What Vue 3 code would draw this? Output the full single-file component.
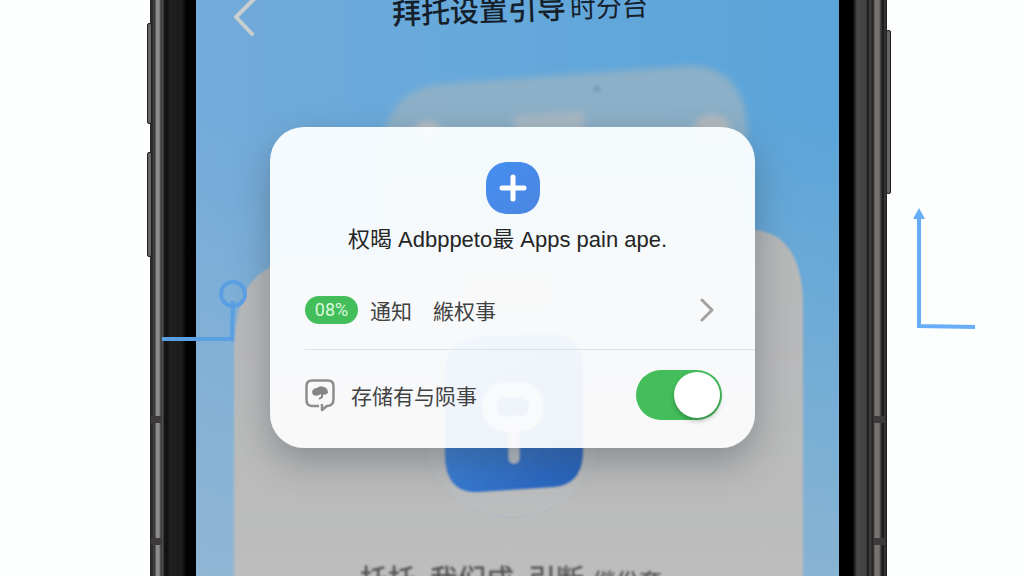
<script setup>
import { ref } from 'vue'
const storage = ref(true)
</script>

<template>
  <main class="scene">
    <div class="margin"></div>
    <div class="edge edge-left">
      <i class="key key-up"></i>
      <i class="key key-down"></i>
      <i class="seam seam-a"></i>
      <i class="seam seam-b"></i>
    </div>
    <section class="screen">
      <svg class="backdrop" viewBox="0 0 643 576" preserveAspectRatio="xMidYMin slice" aria-hidden="true">
        <defs>
          <linearGradient id="sheet" x1="0" y1="0" x2="0" y2="1">
            <stop offset="0" stop-color="#b6b8b9" />
            <stop offset="1" stop-color="#bdbdbd" />
          </linearGradient>
          <linearGradient id="tile" x1="0" y1="0" x2="1" y2="1">
            <stop offset="0" stop-color="#4a93e6" />
            <stop offset="1" stop-color="#2560bb" />
          </linearGradient>
          <filter id="soft" x="-10%" y="-10%" width="120%" height="120%"><feGaussianBlur stdDeviation="3" /></filter>
          <filter id="fine"><feGaussianBlur stdDeviation="1" /></filter>
        </defs>
        <g filter="url(#soft)">
          <path d="M184 240V150C190 108 210 88 246 84L492 66C526 65 546 84 551 120V240Z" fill="#92b2c5" fill-opacity=".88" />
          <ellipse cx="232" cy="130" rx="13" ry="9" fill="#b9bfc4" />
          <ellipse cx="516" cy="128" rx="18" ry="13" fill="#b3bac0" />
          <path d="M318 116L388 111V130H318Z" fill="#a7b8c4" />
        </g>
        <circle cx="401" cy="89" r="4" fill="#7fa3ba" filter="url(#fine)" />
        <path d="M38 600V350C40 302 48 276 86 262L560 230C590 234 605 256 607 300V600Z" fill="url(#sheet)" filter="url(#fine)" />
        <circle cx="316" cy="426" r="91" fill="#c1c2c3" fill-opacity=".35" stroke="#b0b9c5" stroke-width="1" />
        <rect x="266" y="272" width="90" height="34" rx="10" fill="#cdb9a6" filter="url(#soft)" />
        <g filter="url(#fine)">
          <path d="M249 372C249 348 262 338 282 337L354 334C376 334 387 346 387 368V451C387 472 378 485 358 487L282 492C260 493 249 480 249 454Z" fill="url(#tile)" />
          <path d="M318 420V458" stroke="#bdc4ca" stroke-width="11" stroke-linecap="round" />
          <rect x="294" y="390" width="46" height="34" rx="15" fill="none" stroke="#c9d2da" stroke-width="14" />
        </g>
      </svg>
      <header class="topbar">
        <button class="back" type="button" aria-label="返回">
          <svg viewBox="0 0 24 40" width="24" height="40"><path d="M22 -1L4 17L20 34" fill="none" stroke="#c8cecd" stroke-width="4" stroke-linecap="round" stroke-linejoin="round" /></svg>
        </button>
        <h1>拜托设置引导<span>时分台</span></h1>
      </header>

      <div class="dialog" role="dialog" aria-labelledby="dialog-title">
        <svg class="badge" viewBox="0 0 54 52" width="54" height="52" aria-hidden="true">
          <defs><linearGradient id="plus" x1="0" y1="0" x2="1" y2="1"><stop offset="0" stop-color="#438ef0" /><stop offset="1" stop-color="#4c86e2" /></linearGradient></defs>
          <path d="M22 0H32C46 0 54 10 54 22V30C54 43 45 52 32 52H22C9 52 0 43 0 30V22C0 9 9 0 22 0Z" fill="url(#plus)" />
          <path d="M27 15V37M16 26H38" stroke="#fff" stroke-width="5" stroke-linecap="round" />
        </svg>
        <h2 id="dialog-title">权暍 Adbppeto最 Apps pain ape.</h2>
        <button class="row" type="button">
          <span class="pill">08%</span>
          <span class="label">通知</span>
          <span class="label second">緱权事</span>
          <svg class="next" viewBox="0 0 16 24" width="16" height="24" aria-hidden="true"><path d="M3 2L13 12L3 22" fill="none" stroke="#a2a2a2" stroke-width="3" stroke-linecap="round" stroke-linejoin="round" /></svg>
        </button>
        <div class="row storage">
          <svg viewBox="0 0 30 33" width="30" height="33" aria-hidden="true">
            <path d="M14 27H7Q1.500 27 1.500 21V7Q1.500 1.500 7 1.500H23Q28.500 1.500 28.500 7V20Q28.500 27 22 27L17 31V25" fill="none" stroke="#8d8d8d" stroke-width="2.500" stroke-linejoin="round" />
            <path d="M7 13Q8 9 12 9Q15 6 19 8Q23 9 23 14Q20 17 16 15Q12 18 8 16Z" fill="#858585" />
            <path d="M17 15V18L14 20" fill="none" stroke="#858585" stroke-width="2" />
          </svg>
          <label for="storage">存储有与陨事</label>
          <input id="storage" v-model="storage" type="checkbox" role="switch" />
        </div>
      </div>

      <p class="caption">托托<span>我们成</span><span>引断</span><small>继份套</small></p>
    </section>
    <div class="edge edge-right">
      <i class="key key-power"></i>
      <i class="seam seam-a"></i>
      <i class="seam seam-b"></i>
    </div>
    <div class="margin">
      <svg class="arrow" viewBox="0 0 64 122" width="64" height="122" aria-hidden="true">
        <path d="M7 8V118L63 119" fill="none" stroke="#67adf8" stroke-width="4" />
        <path d="M7 0L13 11H1Z" fill="#67adf8" />
      </svg>
    </div>
    <svg class="pointer" viewBox="0 0 88 64" width="88" height="64" aria-hidden="true">
      <path d="M0 59H70L71 21" fill="none" stroke="#5b9fe3" stroke-width="4" />
      <circle cx="71" cy="14" r="12" fill="none" stroke="#5b9fe3" stroke-width="4" />
    </svg>
  </main>
</template>

<style>
body {
  margin: 0;
  background: #fdfefe;
}
</style>

<style scoped>
.scene {
  position: relative;
  display: grid;
  grid-template-columns: 150fr 46px 643fr 48px 137fr;
  height: 100vh;
  overflow: hidden;
  font-family: "Liberation Sans", "Noto Sans CJK SC", sans-serif;
  color: #333;
}
.edge {
  position: relative;
}
.edge-left {
  background: linear-gradient(90deg, #292929 0 2px, #414141 4px, #303030 5px, #8b8888 6px, #918d8d 9px, #393939 11px, #535353 13px, #171717 14px, #101010 17px, #202020 20px, #1c1c1c 32px, #030303 36px, #000 46px);
}
.edge-right {
  background: linear-gradient(90deg, #000 0 14px, #252525 16px, #494949 18px, #424242 27px, #171717 29px, #444 31px, #202020 34px, #77736f 36px, #77736f 40px, #363636 42px, #151515 44px, #3d3d3d 46px, #181818 48px);
}
.key {
  position: absolute;
  width: 5px;
  border: 1px solid #202020;
  border-radius: 2px;
  background: #666;
  box-sizing: border-box;
}
.key-up { left: -3px; top: 23px; height: 101px; }
.key-down { left: -3px; top: 152px; height: 105px; }
.key-power { right: -4px; top: 30px; height: 164px; }
.seam {
  position: absolute;
  width: 11px;
  height: 7px;
  background: #3c3a3a;
}
.edge-left .seam { left: 1px; }
.edge-right .seam { right: 2px; }
.seam-a { top: 416px; }
.seam-b { top: 538px; }
.screen {
  position: relative;
  display: flex;
  flex-direction: column;
  overflow: hidden;
  background: linear-gradient(180deg, transparent 0 20%, rgba(155, 186, 208, 0.7) 100%), linear-gradient(90deg, #74abda, #67a9db 40%, #5aa4d9);
}
.backdrop {
  position: absolute;
  inset: 0;
  width: 100%;
  height: 100%;
}
.topbar {
  position: relative;
  display: flex;
  flex-shrink: 0;
  align-items: flex-start;
  height: 42px;
  padding-left: 36px;
}
.back {
  display: flex;
  padding: 0;
  border: 0;
  background: none;
}
.topbar h1 {
  margin: -11px 0 0 136px;
  font-size: 29px;
  line-height: 42px;
  font-weight: 500;
  color: #15202a;
  white-space: nowrap;
  transform: rotate(-2deg);
}
.topbar h1 span {
  margin-left: 4px;
  font-size: 26px;
  font-weight: 400;
}
.dialog {
  position: relative;
  display: flex;
  flex-direction: column;
  flex-shrink: 0;
  box-sizing: border-box;
  margin: 85px 84px 0 74px;
  padding-top: 35px;
  border-radius: 34px;
  background: linear-gradient(180deg, rgba(249, 253, 255, 0.96), rgba(253, 253, 254, 0.93));
  box-shadow: 0 14px 36px rgba(50, 60, 70, 0.36);
}
.badge {
  align-self: center;
}
.dialog h2 {
  margin: 10px 0 14px;
  padding-right: 10px;
  font-size: 22px;
  line-height: 32px;
  font-weight: 400;
  text-align: center;
  white-space: nowrap;
  color: #252525;
}
.row {
  display: flex;
  align-items: center;
  height: 80px;
  margin: 0 0 0 35px;
  padding: 0 40px 0 0;
  border: 0;
  border-bottom: 1px solid #dfe2e5;
  background: none;
  font: inherit;
  font-size: 21px;
  color: #424242;
  text-align: left;
  white-space: nowrap;
}
.row.storage {
  height: 90px;
  margin-bottom: 8px;
  padding-right: 33px;
  border: 0;
}
.pill {
  width: 53px;
  border-radius: 14px;
  background: #43be5b;
  color: #dcf8dd;
  font-family: Roboto, "Liberation Sans", sans-serif;
  font-size: 18px;
  line-height: 28px;
  text-align: center;
}
.label {
  margin-left: 12px;
}
.label.second {
  margin-left: 21px;
}
.next {
  margin-left: auto;
}
.storage label {
  margin-left: 16px;
}
.storage input {
  appearance: none;
  display: flex;
  align-items: center;
  box-sizing: border-box;
  width: 86px;
  height: 50px;
  margin: 0 0 0 auto;
  padding: 2px;
  border-radius: 25px;
  background: #bbb;
}
.storage input:checked {
  justify-content: flex-end;
  background: #43be5b;
}
.storage input::before {
  content: "";
  width: 46px;
  height: 46px;
  border-radius: 50%;
  background: #fff;
  box-shadow: 0 3px 5px rgba(0, 0, 0, 0.25);
}
.caption {
  position: relative;
  display: flex;
  flex-shrink: 0;
  align-items: baseline;
  gap: 14px;
  margin: 112px 0 0 164px;
  font-size: 28px;
  line-height: 42px;
  font-weight: 500;
  white-space: nowrap;
  color: #555;
  filter: blur(1px);
}
.caption small {
  margin-left: -5px;
  font-size: 23px;
}
.pointer {
  position: absolute;
  left: 162px;
  top: 280px;
}
.arrow {
  display: block;
  margin: 208px 0 0 25px;
}
</style>
